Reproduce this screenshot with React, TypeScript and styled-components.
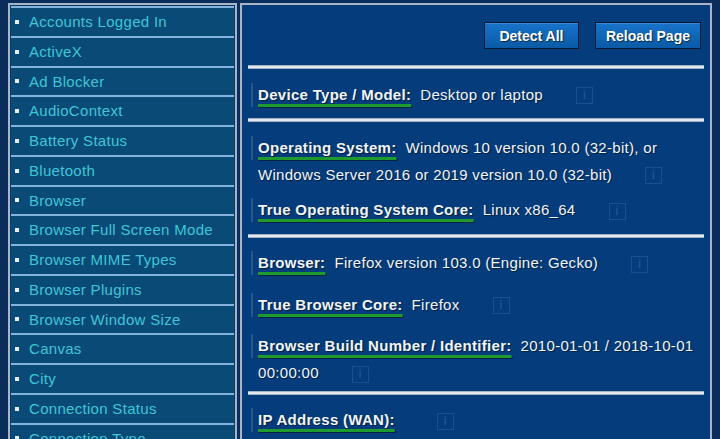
import styled, { createGlobalStyle } from 'styled-components';

const GlobalStyle = createGlobalStyle`
  html, body {
    margin: 0;
    padding: 0;
    height: 100%;
    overflow: hidden;
    background: #0a2d5c;
    font-family: 'Liberation Sans', Arial, sans-serif;
  }
`;

const Page = styled.div`
  display: flex;
  align-items: flex-start;
  gap: 3px;
  padding: 3px 8px 0 8px;
  height: 100vh;
  box-sizing: border-box;
`;

const Sidebar = styled.ul`
  width: 229px;
  flex: none;
  margin: 0;
  padding: 1px;
  list-style: none;
  border: 2px solid #a6b6c8;
  background: #0a3a66;
  box-sizing: border-box;
`;

const NavItem = styled.li`
  display: flex;
  align-items: center;
  gap: 10px;
  padding-left: 4px;
  border-top: 2px solid #84b4de;
  background: #0a4a76;
  color: #3ec6d6;
  font-size: 15px;
  letter-spacing: 0.3px;
  line-height: 27.75px;
  white-space: nowrap;
  &::before {
    content: '';
    width: 4px;
    height: 4px;
    background: #e4f0f8;
  }
`;

const Main = styled.main`
  flex: 1;
  min-height: 600px;
  border: 2px solid #a6b6c8;
  background: #043c7c;
  padding: 17px 6px 0 6px;
  box-sizing: border-box;
  color: #f2f4f6;
  font-size: 15px;
  letter-spacing: 0.3px;
  text-shadow: 1px 1px 1px rgba(0, 0, 0, 0.45);
`;

const Toolbar = styled.div`
  display: flex;
  justify-content: flex-end;
  gap: 16px;
  padding-right: 3px;
  margin-bottom: 16px;
`;

const Button = styled.button`
  height: 27px;
  min-width: 95px;
  padding: 0 10px;
  border: 1px solid #071a33;
  background: linear-gradient(#1874ca, #0a5aa6);
  box-shadow: inset 0 1px 0 rgba(255, 255, 255, 0.15);
  color: #fff;
  font-family: inherit;
  font-size: 14px;
  font-weight: bold;
  letter-spacing: 0;
  text-shadow: 1px 1px 1px rgba(0, 0, 0, 0.6);
  cursor: pointer;
`;

const Rule = styled.hr`
  margin: 0;
  height: 2px;
  border: 0;
  border-top: 1px solid #9fb0c4;
  border-bottom: 1px solid #9fb0c4;
  background: #e2e8ee;
`;

const Section = styled.section`
  display: flex;
  flex-direction: column;
  gap: 8.5px;
  padding: 11.5px 0 4.5px 3px;
`;

const Row = styled.div<{ $wrap?: boolean }>`
  line-height: 27px;
  padding: 0 4px 0 7px;
  padding-bottom: ${(p) => (p.$wrap ? 0 : 6)}px;
  background: linear-gradient(#25568e, #25568e) no-repeat 0 2px / 2px 24px;
`;

const Label = styled.span`
  font-weight: bold;
  margin-right: 9px;
  text-decoration: underline;
  text-decoration-color: #1f9a2c;
  text-decoration-thickness: 3px;
  text-underline-offset: 4px;
  text-decoration-skip-ink: none;
`;

const Info = styled.span`
  display: inline-block;
  width: 15px;
  height: 15px;
  margin-left: 33px;
  border: 1px solid #1b4f8e;
  color: #285c98;
  font-size: 12px;
  line-height: 15px;
  text-align: center;
  vertical-align: middle;
  text-shadow: none;
`;

const navItems = [
  'Accounts Logged In',
  'ActiveX',
  'Ad Blocker',
  'AudioContext',
  'Battery Status',
  'Bluetooth',
  'Browser',
  'Browser Full Screen Mode',
  'Browser MIME Types',
  'Browser Plugins',
  'Browser Window Size',
  'Canvas',
  'City',
  'Connection Status',
  'Connection Type',
  'Cookies',
  'CPU',
];

type Field = { label: string; value: string; wrap?: boolean };

const sections: Field[][] = [
  [{ label: 'Device Type / Model:', value: 'Desktop or laptop' }],
  [
    {
      label: 'Operating System:',
      value: 'Windows 10 version 10.0 (32-bit), or Windows Server 2016 or 2019 version 10.0 (32-bit)',
      wrap: true,
    },
    { label: 'True Operating System Core:', value: 'Linux x86_64' },
  ],
  [
    { label: 'Browser:', value: 'Firefox version 103.0 (Engine: Gecko)' },
    { label: 'True Browser Core:', value: 'Firefox' },
    {
      label: 'Browser Build Number / Identifier:',
      value: '2010-01-01 / 2018-10-01 00:00:00',
      wrap: true,
    },
  ],
  [{ label: 'IP Address (WAN):', value: '' }],
];

function App() {
  return (
    <>
      <GlobalStyle />
      <Page>
        <Sidebar>
          {navItems.map((item) => (
            <NavItem key={item}>{item}</NavItem>
          ))}
        </Sidebar>
        <Main>
          <Toolbar>
            <Button>Detect All</Button>
            <Button>Reload Page</Button>
          </Toolbar>
          {sections.map((fields, i) => (
            <div key={i}>
              <Rule />
              <Section>
                {fields.map((f) => (
                  <Row key={f.label} $wrap={f.wrap}>
                    <Label>{f.label}</Label>
                    {f.value}
                    <Info>i</Info>
                  </Row>
                ))}
              </Section>
            </div>
          ))}
        </Main>
      </Page>
    </>
  );
}

export default App;
